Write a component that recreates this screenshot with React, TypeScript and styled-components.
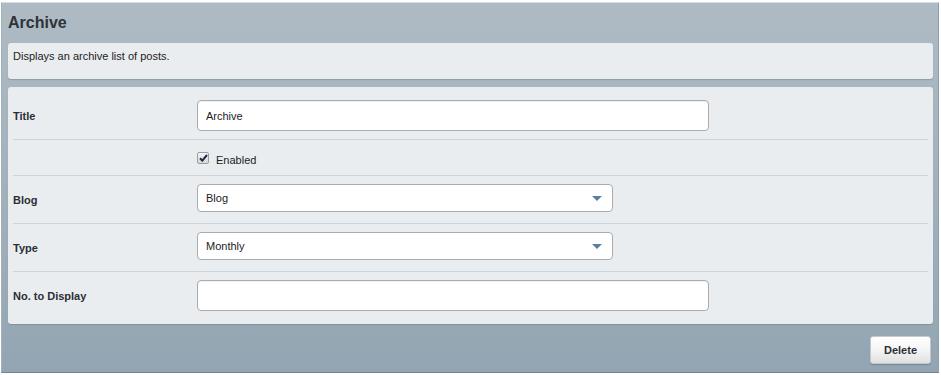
import React from "react";
import styled, { createGlobalStyle } from "styled-components";

const Global = createGlobalStyle`
  html, body { margin: 0; padding: 0; background: #ffffff; }
  body { font-family: "Liberation Sans", Arial, sans-serif; }
  * { box-sizing: border-box; }
`;

const Panel = styled.div`
  margin: 2px 2px 0 1px;
  width: 938px;
  height: 371px;
  display: flex;
  flex-direction: column;
  padding: 0 5px 0 6px;
  background: linear-gradient(to bottom, #aebbc5 0%, #a7b5bf 30%, #9cadb9 70%, #93a5b2 100%);
  border-top: 1px solid #d8dde1;
  border-right: 1px solid #8c9ca8;
  border-bottom: 1px solid #6f8392;
  border-left: 1px solid #a3b1bb;
`;

const Heading = styled.h2`
  margin: 0;
  height: 40px;
  display: flex;
  align-items: center;
  padding: 0;
  font-size: 16px;
  font-weight: bold;
  color: #2f3338;
`;

const Box = styled.div`
  background: #eaedf0;
  border-radius: 3px;
  box-shadow: 0 1px 1px rgba(60, 80, 95, 0.25);
`;

const Description = styled(Box)`
  height: 36px;
  padding: 7px 5px 0 5px;
  font-size: 11px;
  line-height: 13px;
  color: #222;
`;

const Form = styled(Box)`
  margin-top: 8px;
  height: 237px;
  padding: 0 5px;
  display: flex;
  flex-direction: column;
`;

const Row = styled.div<{ $h: number; $top: number }>`
  height: ${(p) => p.$h}px;
  padding-top: ${(p) => p.$top}px;
  display: flex;
  align-items: flex-start;
  border-bottom: 1px solid #cfd4d8;
  &:last-child { border-bottom: none; }
`;

const Label = styled.div<{ $ctrl: number }>`
  width: 184px;
  flex: none;
  height: ${(p) => p.$ctrl}px;
  display: flex;
  align-items: center;
  font-size: 11px;
  font-weight: bold;
  color: #2b2f33;
`;

const TextInput = styled.input`
  width: 512px;
  height: 31px;
  border: 1px solid #a9acaf;
  border-radius: 4px;
  background: #ffffff;
  padding: 0 8px;
  font-family: "Liberation Sans", Arial, sans-serif;
  font-size: 11px;
  color: #222;
  box-shadow: inset 0 1px 1px rgba(0, 0, 0, 0.06);
  outline: none;
`;

const Select = styled.div`
  width: 416px;
  height: 28px;
  border: 1px solid #a9acaf;
  border-radius: 4px;
  background: #ffffff;
  padding: 0 8px;
  display: flex;
  align-items: center;
  justify-content: space-between;
  font-size: 11px;
  color: #222;
`;

const Arrow = styled.span`
  width: 0;
  height: 0;
  margin-right: 2px;
  border-left: 5px solid transparent;
  border-right: 5px solid transparent;
  border-top: 5px solid #5b7fa3;
`;

const CheckWrap = styled.label`
  display: flex;
  align-items: center;
  gap: 7px;
  font-size: 11px;
  color: #222;
  height: 18px;
`;

const CheckBox = styled.span`
  width: 12px;
  height: 12px;
  margin-top: -5px;
  border: 1px solid #9a9ea2;
  border-radius: 2px;
  background: linear-gradient(to bottom, #f4f4f4, #d6d8da);
  display: flex;
  align-items: center;
  justify-content: center;
`;

const Footer = styled.div`
  flex: 1;
  display: flex;
  justify-content: flex-end;
  align-items: flex-start;
  padding: 12px 2px 0 0;
`;

const Button = styled.button`
  width: 61px;
  height: 28px;
  border: 1px solid #c4c9cd;
  border-radius: 3px;
  background: linear-gradient(to bottom, #ffffff 0%, #f4f4f4 50%, #dfe0e1 100%);
  font-family: "Liberation Sans", Arial, sans-serif;
  font-size: 11px;
  font-weight: bold;
  color: #2b2f33;
  box-shadow: 0 1px 1px rgba(40, 60, 75, 0.3);
  padding: 0;
`;

export default function App() {
  return (
    <>
      <Global />
      <Panel>
        <Heading>Archive</Heading>
        <Description>Displays an archive list of posts.</Description>
        <Form>
          <Row $h={53} $top={13}>
            <Label $ctrl={31}>Title</Label>
            <TextInput defaultValue="Archive" />
          </Row>
          <Row $h={36} $top={11}>
            <Label $ctrl={18}></Label>
            <CheckWrap>
              <CheckBox>
                <svg width="9" height="8" viewBox="0 0 9 8">
                  <path d="M1 4.2 L3.3 6.6 L8 1" fill="none" stroke="#1f2a44" strokeWidth="2" />
                </svg>
              </CheckBox>
              Enabled
            </CheckWrap>
          </Row>
          <Row $h={48} $top={8}>
            <Label $ctrl={32}>Blog</Label>
            <Select>
              Blog
              <Arrow />
            </Select>
          </Row>
          <Row $h={48} $top={8}>
            <Label $ctrl={32}>Type</Label>
            <Select>
              Monthly
              <Arrow />
            </Select>
          </Row>
          <Row $h={52} $top={8}>
            <Label $ctrl={31}>No. to Display</Label>
            <TextInput defaultValue="" />
          </Row>
        </Form>
        <Footer>
          <Button>Delete</Button>
        </Footer>
      </Panel>
    </>
  );
}
